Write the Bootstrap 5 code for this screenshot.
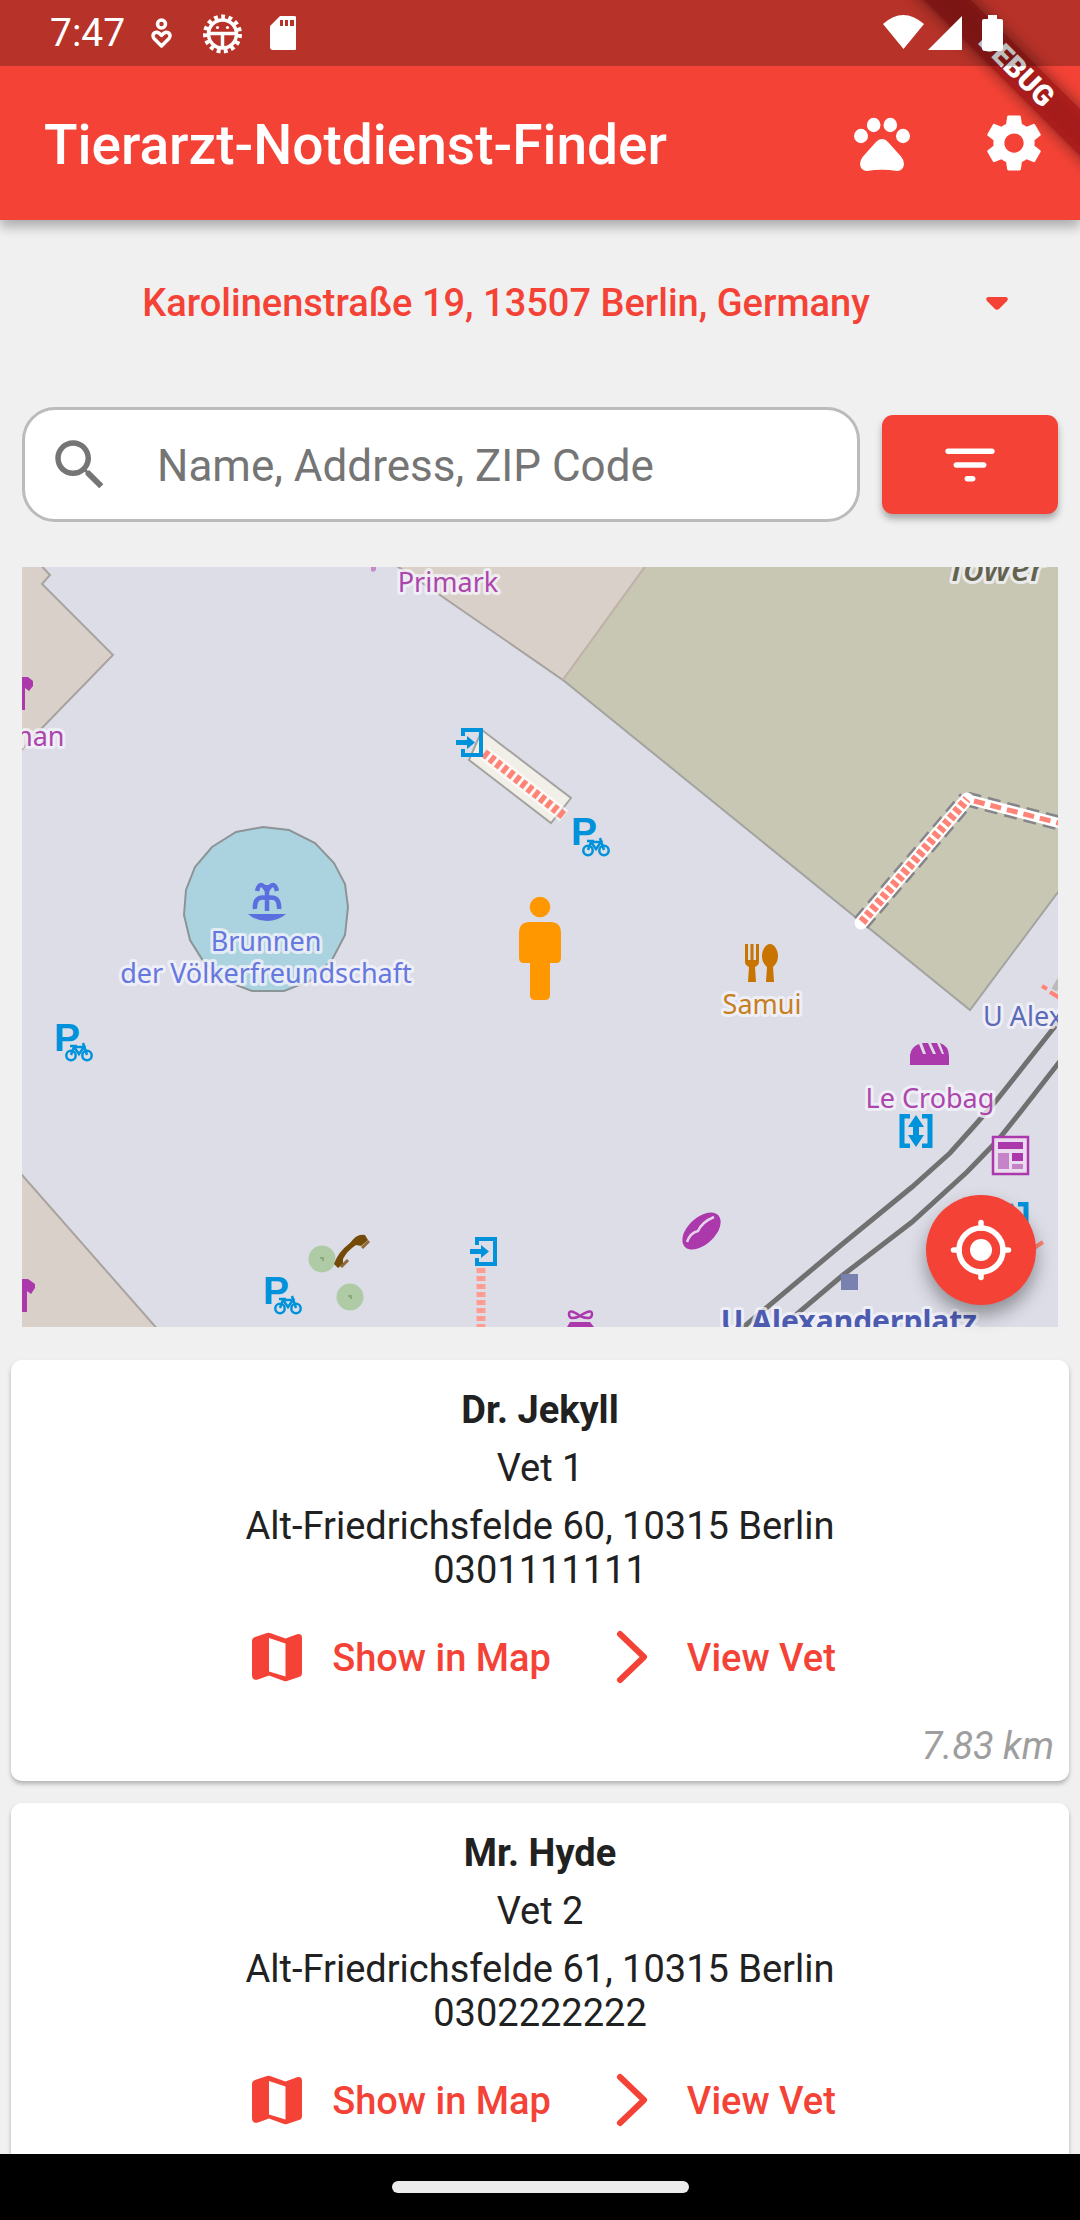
<!DOCTYPE html>
<html lang="de">
<head>
<meta charset="utf-8">
<meta name="viewport" content="width=device-width, initial-scale=1">
<title>Tierarzt-Notdienst-Finder</title>
<link href="https://cdn.jsdelivr.net/npm/bootstrap@5.3.0/dist/css/bootstrap.min.css" rel="stylesheet">
<style>
  :root { --app-red: #f44336; }
  body { background: #f0f0f0; color: #212121; font-family: Roboto, "Liberation Sans", sans-serif; font-size: 38px; line-height: 44px; }
  svg { display: block; flex: none; }
  .screen { height: 100vh; }
  .app-header { background: var(--app-red); color: #fff; box-shadow: 0 7px 11px rgba(0,0,0,.28); z-index: 5; }
  .status-bar { height: 66px; background: rgba(0,0,0,.25); padding: 0 48px 0 50px; z-index: 3; }
  .status-time { font-size: 39px; padding-right: 25px; }
  .app-bar { height: 154px; padding-left: 44px; }
  .app-title { font-size: 55px; line-height: 66px; font-weight: 500; padding-top: 3px; }
  .bar-action { width: 132px; height: 132px; border: 0; color: #fff; }
  .ribbon-clip { width: 220px; height: 220px; z-index: 2; pointer-events: none; }
  .icon-lg { width: 66px; height: 66px; }
  .address-row { height: 166px; padding: 0 50px 0 48px; color: var(--app-red); }
  .address-select { appearance: none; background: transparent; border: 0; color: var(--app-red); font-weight: 500; font-size: 38px; line-height: 48px; text-align: center; text-align-last: center; }
  .search-row { margin: 21px 22px 45px; gap: 22px; }
  .search-box { border: 3px solid #bbb; border-radius: 33px; background: #fff; height: 115px; padding: 0 22px; color: #757575; }
  .search-box input { border: 0; font-size: 44px; line-height: 52px; padding: 3px 0 0 44px; background: transparent; }
  .search-box input::placeholder { color: #757575; opacity: 1; }
  .btn-filter { width: 176px; height: 99px; background: var(--app-red); color: #fff; border: 0; border-radius: 11px; box-shadow: 0 5px 7px rgba(0,0,0,.3); }
  .map-pane { margin: 0 22px 33px; }
  .map-view { width: 100%; height: auto; font-family: "Noto Sans", sans-serif; font-size: 27px; }
  .map-view text { paint-order: stroke; stroke: #f4f4fa; stroke-opacity: .8; stroke-width: 6px; stroke-linejoin: round; }
  .map-view .park { font-family: "Liberation Sans", sans-serif; font-weight: 700; font-size: 39px; stroke: none; }
  .fab { width: 110px; height: 110px; right: 22px; bottom: 22px; background: var(--app-red); color: #fff; border: 0; box-shadow: 0 10px 18px rgba(0,0,0,.36); }
  .vet-list { margin: 0 11px; gap: 22px; }
  .vet-card { border: 0; border-radius: 11px; background: #fff; color: #212121; box-shadow: 0 3px 4px rgba(0,0,0,.25); padding: 28px 15px 13px; flex: none; }
  .vet-lines { gap: 14px; }
  .vet-name { font-size: 38px; line-height: 44px; font-weight: 700; }
  .vet-actions { height: 132px; gap: 4px; }
  .vet-action { color: var(--app-red); font-size: 38px; line-height: 44px; font-weight: 500; padding: 0 22px; gap: 22px; border: 0; }
  .vet-distance { color: #9e9e9e; font-style: italic; }
  .nav-strip { height: 66px; background: #000; z-index: 5; }
  .nav-pill { width: 297px; height: 12px; background: #ececec; }
</style>
<script src="https://cdn.jsdelivr.net/npm/bootstrap@5.3.0/dist/js/bootstrap.bundle.min.js"></script>
</head>
<body>
<svg class="d-none" aria-hidden="true">
  <symbol id="i-map" viewBox="0 0 66 66"><path fill="currentColor" fill-rule="evenodd" d="M8 16Q8 13 11 12L23 8Q24.500 7.500 26 8L41.500 13.500L53 9.200Q58 8 58 13V48Q58 51 55 52L43 56Q41.500 56.500 40 56L25 50.500L14 54.500Q8 56 8 50ZM25 13V46.500L41.500 51.500V18.500Z"/></symbol>
  <symbol id="i-next" viewBox="0 0 66 66"><path fill="none" stroke="currentColor" stroke-width="6" stroke-linecap="round" stroke-linejoin="round" d="M21 9L45 32L21 55"/></symbol>
  <symbol id="m-bike" viewBox="0 0 38 39"><g fill="none" stroke="#0092da" stroke-width="2.500"><circle cx="15" cy="32.500" r="4.700"/><circle cx="31" cy="32.500" r="4.700"/><path d="M15 32L18 24H28L23 31L18 24M31 32L27 20M14 23H21"/></g></symbol>
  <symbol id="m-entry" viewBox="0 0 28 30"><path fill="none" stroke="#0092da" stroke-width="4" d="M7 8V2H25V27H7V21"/><path fill="#0092da" d="M0 12H11V8L19 14.500L11 21V17H0Z"/></symbol>
  <symbol id="m-lift" viewBox="0 0 34 34"><path fill="none" stroke="#0092da" stroke-width="5" d="M11 2H3V32H11M23 2H31V32H23"/><path fill="#0092da" d="M17 1L25 13H20V21H25L17 33L9 21H14V13H9Z"/></symbol>
</svg>

<div class="screen d-flex flex-column overflow-hidden">
  <header class="app-header position-relative">
    <div class="status-bar position-relative d-flex align-items-center">
      <span class="status-time">7:47</span>
      <svg width="146" height="42" viewBox="150 12 146 42" aria-hidden="true">
        <g fill="none" stroke="#fff" stroke-width="3.500"><circle cx="161.500" cy="24" r="4"/><path stroke-linejoin="round" d="M161.500 46L154 38.500C150.500 34 156.500 29 161.500 35.500C166.500 29 172.500 34 169 38.500Z"/>
        <circle cx="222.500" cy="34" r="14"/><circle cx="222.500" cy="34" r="17" stroke-width="5" stroke-dasharray="3.800 3.320"/><path d="M209 33.500H236M222.500 33.500V48"/></g>
        <circle cx="217.500" cy="27.500" r="1.600" fill="#fff"/><circle cx="227.500" cy="27.500" r="1.600" fill="#fff"/>
        <path fill="#fff" fill-rule="evenodd" d="M280 16H294Q297 16 297 19V47Q297 50 294 50H273Q270 50 270 47V26ZM280 20V26H283V20ZM285 20V26H288V20ZM290 20V26H294V20Z"/>
      </svg>
      <svg class="ms-auto" width="149" height="42" viewBox="883 12 149 42" aria-hidden="true"><path fill="#fff" d="M883 24Q903 6 924 24L903.500 49ZM962 16V50H928ZM988 15H997V19H1001Q1003 19 1003 21V48Q1003 51 1000 51H985Q982 51 982 48V21Q982 19 984 19H988Z"/></svg>
    </div>
    <nav class="app-bar d-flex align-items-center" aria-label="Main">
      <h1 class="app-title mb-0 me-auto">Tierarzt-Notdienst-Finder</h1>
      <button class="btn bar-action p-0 d-flex align-items-center justify-content-center" type="button" aria-label="Pets">
        <svg class="icon-lg" viewBox="0 0 66 66" fill="currentColor"><ellipse cx="12" cy="26" rx="7" ry="7.200"/><ellipse cx="24.700" cy="15" rx="6.800" ry="7.200"/><ellipse cx="41.300" cy="15" rx="6.800" ry="7.200"/><ellipse cx="54" cy="26" rx="7" ry="7.200"/><path d="M33 29Q36.500 29 39 32L52 46.500Q55 50 55 54Q54.500 60.500 48 61Q33 58.500 18 61Q11.500 60.500 11 54Q11 50 14 46.500L27 32Q29.500 29 33 29Z"/></svg>
      </button>
      <button class="btn bar-action p-0 d-flex align-items-center justify-content-center" type="button" aria-label="Settings">
        <svg class="icon-lg" viewBox="0 0 24 24" fill="currentColor"><path d="M19.430 12.980c.04-.32.07-.64.07-.98s-.03-.66-.07-.98l2.110-1.650c.19-.15.24-.42.12-.64l-2-3.460c-.12-.22-.39-.3-.61-.22l-2.490 1c-.52-.4-1.080-.73-1.690-.98l-.38-2.650C14.460 2.180 14.250 2 14 2h-4c-.25 0-.46.18-.49.42l-.38 2.650c-.61.25-1.170.59-1.690.98l-2.490-1c-.23-.09-.49 0-.61.22l-2 3.460c-.13.22-.07.49.12.64l2.110 1.650c-.04.32-.07.65-.07.98s.03.66.07.98l-2.110 1.650c-.19.15-.24.42-.12.64l2 3.460c.12.22.39.3.61.22l2.490-1c.52.4 1.080.73 1.690.98l.38 2.650c.03.24.24.42.49.42h4c.25 0 .46-.18.49-.42l.38-2.650c.61-.25 1.170-.59 1.690-.98l2.490 1c.23.09.49 0 .61-.22l2-3.460c.12-.22.07-.49-.12-.64l-2.110-1.650zM12 15.500c-1.930 0-3.500-1.570-3.500-3.500s1.570-3.500 3.500-3.500 3.500 1.570 3.500 3.500-1.570 3.500-3.500 3.500z"/></svg>
      </button>
    </nav>
    <div class="ribbon-clip position-absolute top-0 end-0 overflow-hidden">
      <svg width="220" height="220" viewBox="0 0 220 220">
        <defs><filter id="ribbonShade" x="-20%" y="-200%" width="140%" height="500%"><feGaussianBlur stdDeviation="8"/></filter></defs>
        <g transform="translate(154 66) rotate(45)">
          <rect x="-150" y="-16" width="300" height="33" fill="#000" opacity=".5" filter="url(#ribbonShade)"/>
          <rect x="-150" y="-16" width="300" height="33" fill="#ab1b1b" opacity=".85"/>
          <text x="4" y="10" text-anchor="middle" fill="#fff" font-family="Roboto, sans-serif" font-weight="900" font-size="29">DEBUG</text>
        </g>
      </svg>
    </div>
  </header>

  <main class="flex-fill overflow-hidden d-flex flex-column">
    <div class="address-row d-flex align-items-center flex-shrink-0">
      <select class="address-select flex-fill p-0" aria-label="Location"><option>Karolinenstraße 19, 13507 Berlin, Germany</option></select>
      <svg class="icon-lg" viewBox="0 0 66 66" aria-hidden="true"><path fill="currentColor" d="M24 27H42Q45 28 43 31L35.500 38.500Q33 41 30.500 38.500L23 31Q21 28 24 27Z"/></svg>
    </div>

    <form class="search-row d-flex align-items-center flex-shrink-0">
      <div class="search-box d-flex align-items-center flex-fill">
        <svg class="icon-lg" viewBox="0 0 24 24" fill="currentColor" aria-hidden="true"><path d="M15.500 14h-.79l-.28-.27C15.410 12.590 16 11.110 16 9.500 16 5.910 13.090 3 9.500 3S3 5.910 3 9.500 5.910 16 9.500 16c1.610 0 3.090-.59 4.230-1.570l.27.28v.79l5 4.990L20.490 19l-4.990-5zm-6 0C7.010 14 5 11.990 5 9.500S7.010 5 9.500 5 14 7.010 14 9.500 11.990 14 9.500 14z"/></svg>
        <input class="flex-fill w-100" type="text" placeholder="Name, Address, ZIP Code" aria-label="Name, Address, ZIP Code">
      </div>
      <button class="btn btn-filter p-0 d-flex align-items-center justify-content-center" type="button" aria-label="Filter">
        <svg class="icon-lg" viewBox="0 0 24 24" fill="currentColor"><path d="M11 18h2c.55 0 1-.45 1-1s-.45-1-1-1h-2c-.55 0-1 .45-1 1s.45 1 1 1zM3 7c0 .55.45 1 1 1h16c.55 0 1-.45 1-1s-.45-1-1-1H4c-.55 0-1 .45-1 1zm4 6h10c.55 0 1-.45 1-1s-.45-1-1-1H7c-.55 0-1 .45-1 1s.45 1 1 1z"/></svg>
      </button>
    </form>

    <section class="map-pane position-relative flex-shrink-0" aria-label="Map">
      <svg class="map-view" viewBox="22 567 1036 760">
        <rect x="22" y="567" width="1036" height="760" fill="#dddde8"/>
        <!-- buildings -->
        <g fill="#d9d0c9" stroke="#a8a39f" stroke-width="2">
          <path d="M10 560H36L50 575L42 584L113 655L40 730L10 762Z"/>
          <path d="M388 560L437 593L563 680L650 560Z"/>
          <path d="M10 1160L22 1175L160 1332H10Z"/>
        </g>
        <path d="M650 560H1070V876L970 1010L563 680Z" fill="#c8c7b3"/>
        <path d="M1070 876L970 1010L563 680" fill="none" stroke="#a3a3a0" stroke-width="2"/>
        <path d="M563 680L650 560" stroke="#c2b3a8" stroke-width="2"/>
        <!-- stairs and footways -->
        <path d="M482 730L571 798L551 823L469 760Z" fill="#f2efe9" stroke="#a3a3a0" stroke-width="2"/>
        <path d="M484 753L564 816" stroke="#fff" stroke-opacity=".6" stroke-width="14"/>
        <path d="M484 753L564 816" stroke="#ff8477" stroke-width="9" stroke-dasharray="5 3"/>
        <g fill="none">
          <path d="M861 923L967 799" stroke="#85858a" stroke-width="18" stroke-dasharray="13 7"/>
          <path d="M967 799L1070 826" stroke="#85858a" stroke-width="15" stroke-dasharray="13 7"/>
          <path d="M861 923L967 799" stroke="#fff" stroke-width="13" stroke-linecap="round"/>
          <path d="M967 799L1070 826" stroke="#fff" stroke-width="10"/>
          <path d="M862 922L967 799" stroke="#ff8477" stroke-width="9" stroke-dasharray="5 3"/>
          <path d="M974 801L1070 826" stroke="#ff8477" stroke-width="5" stroke-dasharray="11 6"/>
          <path d="M481 1268V1327" stroke="#ff9d93" stroke-width="9" stroke-dasharray="5 3"/>
          <path d="M1042 986L1047 989M1050 992L1060 998M1034 1248L1043 1242" stroke="#ff8477" stroke-width="4"/>
          <path d="M1060 980L1054 990" stroke="#bbb" stroke-width="6"/>
        </g>
        <!-- rails -->
        <g fill="none" stroke="#707070" stroke-width="5">
          <path d="M1064 1015L996 1101L976 1124L950 1153L912 1187L840 1246L740 1330"/>
          <path d="M1064 1056L1022 1110L998 1140L967 1172L912 1222L843 1275L778 1330"/>
        </g>
        <!-- fountain -->
        <path d="M263 827L289 830L315 843L334 863L345 884L348 907L345 935L332 960L310 981L284 991H252L226 981L205 964L190 940L184 915L186 890L195 867L212 847L236 832Z" fill="#aad3df" stroke="#8d9496" stroke-width="2"/>
        <g fill="none" stroke="#5a6ee0" stroke-width="4.500"><path d="M267 885V911M267 891Q260 879 257 891M267 891Q274 879 277 891M267 898Q254 895 255 909M267 898Q280 895 279 909"/></g>
        <path d="M248 914H286Q278 921 267 921Q256 921 248 914Z" fill="#5a6ee0"/>
        <!-- trees -->
        <g fill="#aecba5"><circle cx="322" cy="1259" r="13.500"/><circle cx="350" cy="1297" r="13.500"/></g>
        <path d="M320 1258H323V1261M348 1296H351V1299" fill="none" stroke="#8aa87f" stroke-width="2"/>
        <!-- shops and services -->
        <path d="M22 677H28L33 681V686L29 691L25 688V710H22Z" fill="#ac39ac"/>
        <path d="M22 1279H28L35 1284V1288L31 1294L27 1291V1312H22Z" fill="#ac39ac"/>
        <path d="M371 567H376V570Q374 573 371 571Z" fill="#c58cc8"/>
        <use href="#m-entry" x="456" y="728" width="28" height="30"/>
        <use href="#m-entry" x="470" y="1237" width="28" height="30"/>
        <g fill="#0092da">
          <text class="park" x="571" y="845">P</text><use href="#m-bike" x="573" y="818" width="38" height="39"/>
          <text class="park" x="54" y="1051">P</text><use href="#m-bike" x="56" y="1023" width="38" height="39"/>
          <text class="park" x="263" y="1304">P</text><use href="#m-bike" x="265" y="1276" width="38" height="39"/>
        </g>
        <g fill="#c77400"><path d="M745 944H748V960H750.500V944H753.500V960H756V944H759V962Q759 965 755 967L756 982H748L749 967Q745 965 745 962Z"/><path d="M770 944C775 944 778 951 778 956C778 962 775 965 773 967L774 982H766L767 967C765 965 762 962 762 956C762 951 765 944 770 944Z"/></g>
        <path d="M910 1065V1055Q911 1047 919 1044L923 1054H926L922 1043H928L933 1054H936L931 1043H937L942 1054H944L940 1043Q949 1046 949 1056V1065Z" fill="#ac39ac"/>
        <use href="#m-lift" x="899" y="1114" width="34" height="34"/>
        <use href="#m-lift" x="995" y="1202" width="34" height="34"/>
        <rect x="993" y="1137" width="35" height="37" fill="#e9dcee" stroke="#ac39ac" stroke-width="2.500"/>
        <path d="M998 1142H1023V1149H998ZM1012 1153H1023V1161H1012Z" fill="#ac39ac"/><path d="M998 1153H1009V1169H998ZM1012 1164H1023V1169H1012Z" fill="#c583c8"/>
        <ellipse cx="701.500" cy="1231" rx="23" ry="13.500" transform="rotate(-43 701.500 1231)" fill="#ac39ac"/>
        <path d="M687 1242Q690 1233 698 1231Q702 1222 714 1217" fill="none" stroke="#e6d3ec" stroke-width="2.500"/>
        <path d="M334 1264Q338 1252 350 1243Q357 1233 365 1235L368 1240L361 1246L356 1245Q347 1251 343 1259V1264L338 1268Z" fill="#734a08"/><path d="M362 1248L369 1241M341 1267L348 1260" stroke="#8f6a38" stroke-width="3"/>
        <g fill="none" stroke="#ac39ac" stroke-width="2.500"><path d="M580 1316Q569 1308 569 1314Q569 1321 580 1316Q592 1308 592 1314Q592 1321 580 1316"/></g><path d="M570 1322H590L594 1327H567Z" fill="#ac39ac"/>
        <rect x="841" y="1274" width="17" height="16" fill="#7981b0"/>
        <!-- labels -->
        <g text-anchor="middle">
          <g fill="#ac46ac"><text x="448" y="592">Primark</text><text x="36" y="746">man</text><text x="930" y="1108">Le Crobag</text></g>
          <g fill="#6677e0"><text x="266" y="951">Brunnen</text><text x="266" y="983">der Völkerfreundschaft</text></g>
          <text x="762" y="1014" fill="#c77f20">Samui</text>
          <text x="849" y="1332" fill="#4c5bb0" font-weight="700" font-size="30">U Alexanderplatz</text>
          <text x="996" y="581" fill="#62624f" font-style="italic" font-weight="500" font-size="37">Tower</text>
        </g>
        <text x="983" y="1026" fill="#5c6bb8">U Alexanderplatz</text>
        <!-- own position -->
        <g fill="#ff9800"><circle cx="540" cy="907" r="10.300"/><path d="M530 922H550Q561 922 561 933V958Q561 963 556 963H550V995Q550 1000 545 1000H535Q530 1000 530 995V963H524Q519 963 519 958V933Q519 922 530 922Z"/></g>
      </svg>
      <button class="btn fab rounded-circle position-absolute p-0 d-flex align-items-center justify-content-center" type="button" aria-label="My location">
        <svg class="icon-lg" viewBox="0 0 24 24" fill="none" stroke="currentColor" stroke-width="2" stroke-linecap="round"><circle cx="12" cy="12" r="8"/><circle cx="12" cy="12" r="4" fill="currentColor" stroke="none"/><path d="M12 2V4M12 20V22M2 12H4M20 12H22"/></svg>
      </button>
    </section>

    <div class="vet-list d-flex flex-column">
      <article class="card vet-card text-center">
        <div class="vet-lines d-flex flex-column">
          <h2 class="vet-name mb-0">Dr. Jekyll</h2>
          <div>Vet 1</div>
          <div>Alt-Friedrichsfelde 60, 10315 Berlin<br>0301111111</div>
        </div>
        <div class="vet-actions d-flex align-items-center justify-content-center">
          <button class="btn vet-action d-flex align-items-center" type="button"><svg class="icon-lg" aria-hidden="true"><use href="#i-map"/></svg>Show in Map</button>
          <button class="btn vet-action d-flex align-items-center" type="button"><svg class="icon-lg" aria-hidden="true"><use href="#i-next"/></svg>View Vet</button>
        </div>
        <div class="vet-distance text-end">7.83 km</div>
      </article>
      <article class="card vet-card text-center">
        <div class="vet-lines d-flex flex-column">
          <h2 class="vet-name mb-0">Mr. Hyde</h2>
          <div>Vet 2</div>
          <div>Alt-Friedrichsfelde 61, 10315 Berlin<br>0302222222</div>
        </div>
        <div class="vet-actions d-flex align-items-center justify-content-center">
          <button class="btn vet-action d-flex align-items-center" type="button"><svg class="icon-lg" aria-hidden="true"><use href="#i-map"/></svg>Show in Map</button>
          <button class="btn vet-action d-flex align-items-center" type="button"><svg class="icon-lg" aria-hidden="true"><use href="#i-next"/></svg>View Vet</button>
        </div>
      </article>
    </div>
  </main>

  <footer class="nav-strip d-flex align-items-center justify-content-center flex-shrink-0"><div class="nav-pill rounded-pill"></div></footer>
</div>
</body>
</html>
